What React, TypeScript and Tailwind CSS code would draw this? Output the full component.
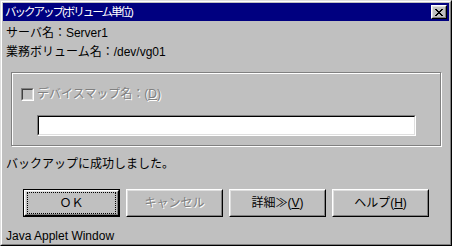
import React from "react"

const font = "font-['Liberation_Sans','Noto_Sans_CJK_JP',sans-serif] text-[12px]"

function CloseGlyph() {
  const rows = ["11000011", "01100110", "00111100", "00011000", "00111100", "01100110", "11000011"]
  return (
    <svg width="8" height="7" viewBox="0 0 8 7" shapeRendering="crispEdges">
      {rows.map((r, y) =>
        r.split("").map((c, x) => (c === "1" ? <rect key={`${x}-${y}`} x={x} y={y} width="1" height="1" fill="#000" /> : null))
      )}
    </svg>
  )
}

function Bevel({ children, className = "" }: { children: React.ReactNode; className?: string }) {
  return (
    <div className={`border border-t-white border-l-white border-r-black border-b-black ${className}`}>
      <div className="w-full h-full border border-t-[#dfdfdf] border-l-[#dfdfdf] border-r-[#808080] border-b-[#808080] flex items-center justify-center">
        {children}
      </div>
    </div>
  )
}

export default function App() {
  return (
    <div className={`w-[452px] h-[246px] bg-[#c0c0c0] border border-t-[#dfdfdf] border-l-[#dfdfdf] border-r-black border-b-black flex ${font}`}>
      <div className="flex-1 border border-t-white border-l-white border-r-[#808080] border-b-[#808080] p-px flex flex-col overflow-hidden">
        {/* title bar */}
        <div className="h-[18px] bg-[#000080] flex items-center justify-between pl-[2px] pr-[2px]">
          <span className="text-white text-[11.5px] leading-[18px] tracking-[-2px]">
            バックアップ(ボリューム単位)
          </span>
          <Bevel className="w-[16px] h-[14px] bg-[#c0c0c0]">
            <CloseGlyph />
          </Bevel>
        </div>

        <div className="flex flex-col pl-[3px] text-black">
          <div className="mt-[3px] leading-[19px]">サーバ名：Server1</div>
          <div className="leading-[19px]">業務ボリューム名：/dev/vg01</div>

          {/* group box */}
          <div className="mt-[10px] ml-[5px] w-[430px] h-[74px] border border-[#808080] shadow-[1px_1px_0_white,inset_1px_1px_0_white] flex flex-col">
            <div className="mt-[15px] ml-[9px] flex items-center h-[13px]">
              <div className="w-[13px] h-[13px] border border-t-[#808080] border-l-[#808080] border-r-white border-b-white">
                <div className="w-full h-full border border-t-[#404040] border-l-[#404040] border-r-[#dfdfdf] border-b-[#dfdfdf] bg-[#c0c0c0]" />
              </div>
              <span className="ml-[3px] text-[#808080] [text-shadow:1px_1px_0_white] leading-[13px]">
                デバイスマップ名：(<u>D</u>)
              </span>
            </div>
            <div className="mt-[14px] ml-[25px] w-[379px] h-[21px] border border-t-[#808080] border-l-[#808080] border-r-white border-b-white">
              <div className="w-full h-full border border-t-black border-l-black border-r-[#dfdfdf] border-b-[#dfdfdf] bg-white" />
            </div>
          </div>

          <div className="mt-[9px] leading-[19px]">バックアップに成功しました。</div>

          {/* buttons */}
          <div className="mt-[15px] ml-[17px] flex gap-[6px]">
            <div className="w-[97px] h-[28px] border border-black">
              <Bevel className="w-full h-full">
                <div className="w-full h-full m-[1px] border border-dotted border-black flex items-center justify-center">
                  ＯＫ
                </div>
              </Bevel>
            </div>
            <Bevel className="w-[97px] h-[28px]">
              <span className="text-[#808080] [text-shadow:1px_1px_0_white]">キャンセル</span>
            </Bevel>
            <Bevel className="w-[97px] h-[28px]">
              <span>詳細≫(<u>V</u>)</span>
            </Bevel>
            <Bevel className="w-[97px] h-[28px]">
              <span>ヘルプ(<u>H</u>)</span>
            </Bevel>
          </div>

          <div className="mt-[12px] leading-[15px]">Java Applet Window</div>
        </div>
      </div>
    </div>
  )
}
